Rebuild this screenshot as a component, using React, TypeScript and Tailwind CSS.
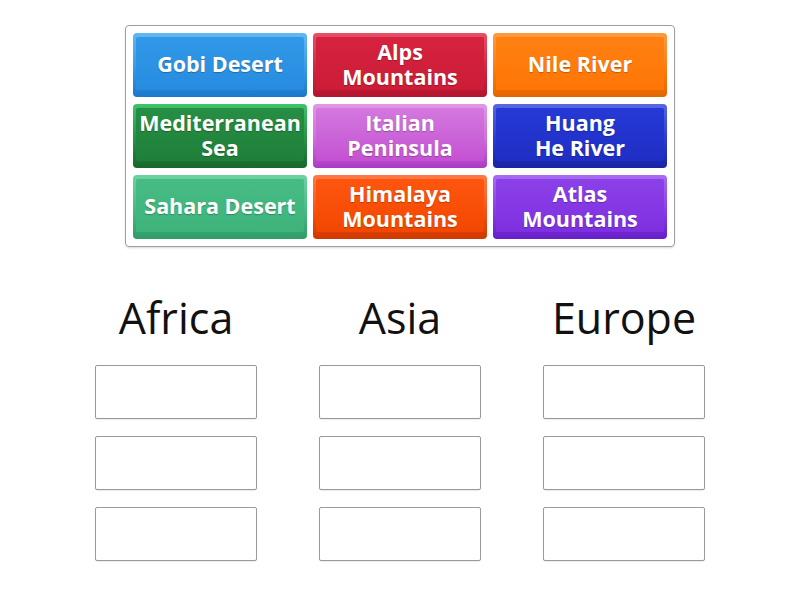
import React from "react";

type Tile = { lines: string[]; outer: string; inner: string };

const tiles: Tile[] = [
  {
    lines: ["Gobi Desert"],
    outer: "bg-linear-to-b from-[#62b8f2] via-[#3a9ee9] to-[#1b78cc]",
    inner: "bg-linear-to-b from-[#3199e8] to-[#278ce0]",
  },
  {
    lines: ["Alps", "Mountains"],
    outer: "bg-linear-to-b from-[#e65068] via-[#d82742] to-[#b3142e]",
    inner: "bg-linear-to-b from-[#d6233f] to-[#cc1c37]",
  },
  {
    lines: ["Nile River"],
    outer: "bg-linear-to-b from-[#ff9a40] via-[#ff7f12] to-[#e46600]",
    inner: "bg-linear-to-b from-[#ff8011] to-[#ff7606]",
  },
  {
    lines: ["Mediterranean", "Sea"],
    outer: "bg-linear-to-b from-[#3fc268] via-[#2a9648] to-[#17672e]",
    inner: "bg-linear-to-b from-[#268f44] to-[#1f7f3a]",
  },
  {
    lines: ["Italian", "Peninsula"],
    outer: "bg-linear-to-b from-[#e197e5] via-[#d173dc] to-[#ad38c4]",
    inner: "bg-linear-to-b from-[#d478de] to-[#c451d3]",
  },
  {
    lines: ["Huang", "He River"],
    outer: "bg-linear-to-b from-[#5967e0] via-[#2c3fd6] to-[#1824a3]",
    inner: "bg-linear-to-b from-[#2639d6] to-[#1f2fc4]",
  },
  {
    lines: ["Sahara Desert"],
    outer: "bg-linear-to-b from-[#6cd3a2] via-[#4bbd88] to-[#309c68]",
    inner: "bg-linear-to-b from-[#47bb84] to-[#3fb37c]",
  },
  {
    lines: ["Himalaya", "Mountains"],
    outer: "bg-linear-to-b from-[#ff7a45] via-[#ff5515] to-[#cf3800]",
    inner: "bg-linear-to-b from-[#ff560f] to-[#f24700]",
  },
  {
    lines: ["Atlas", "Mountains"],
    outer: "bg-linear-to-b from-[#a66cf0] via-[#8d42e8] to-[#661ec8]",
    inner: "bg-linear-to-b from-[#8c40e8] to-[#7e30e0]",
  },
];

const categories = ["Africa", "Asia", "Europe"];

export default function App() {
  return (
    <div className="w-[800px] h-[600px] bg-white pt-[25px] font-['Open_Sans',sans-serif]">
      <div className="mx-auto w-[550px] h-[222px] border border-[#a0a0a0] rounded-[4px] p-[7px] shadow-[0_1px_2px_rgba(0,0,0,0.15)]">
        <div className="grid grid-cols-3 gap-x-[6px] gap-y-[7px]">
          {tiles.map((t, i) => (
            <div
              key={i}
              className={`h-[64px] rounded-[4px] pt-[4px] px-[3px] pb-[7px] ${t.outer}`}
            >
              <div
                className={`h-full rounded-[2px] flex flex-col items-center justify-center ${t.inner}`}
              >
                {t.lines.map((l, j) => (
                  <span
                    key={j}
                    className="text-white font-bold text-[21.5px] leading-[25px] whitespace-nowrap [text-shadow:0_1px_1px_rgba(0,0,0,0.25)]"
                  >
                    {l}
                  </span>
                ))}
              </div>
            </div>
          ))}
        </div>
      </div>

      <div className="mt-[43px] ml-[95px] w-[610px] flex justify-between">
        {categories.map((c) => (
          <div key={c} className="w-[162px] flex flex-col items-center">
            <div className="h-[56px] leading-[56px] text-[43px] text-[#111] whitespace-nowrap">
              {c}
            </div>
            <div className="mt-[19px] flex flex-col gap-[17px] w-full">
              {[0, 1, 2].map((k) => (
                <div
                  key={k}
                  className="h-[54px] w-full border border-[#9a9a9a] rounded-[2px] bg-white shadow-[0_1px_1px_rgba(0,0,0,0.08)]"
                />
              ))}
            </div>
          </div>
        ))}
      </div>
    </div>
  );
}
